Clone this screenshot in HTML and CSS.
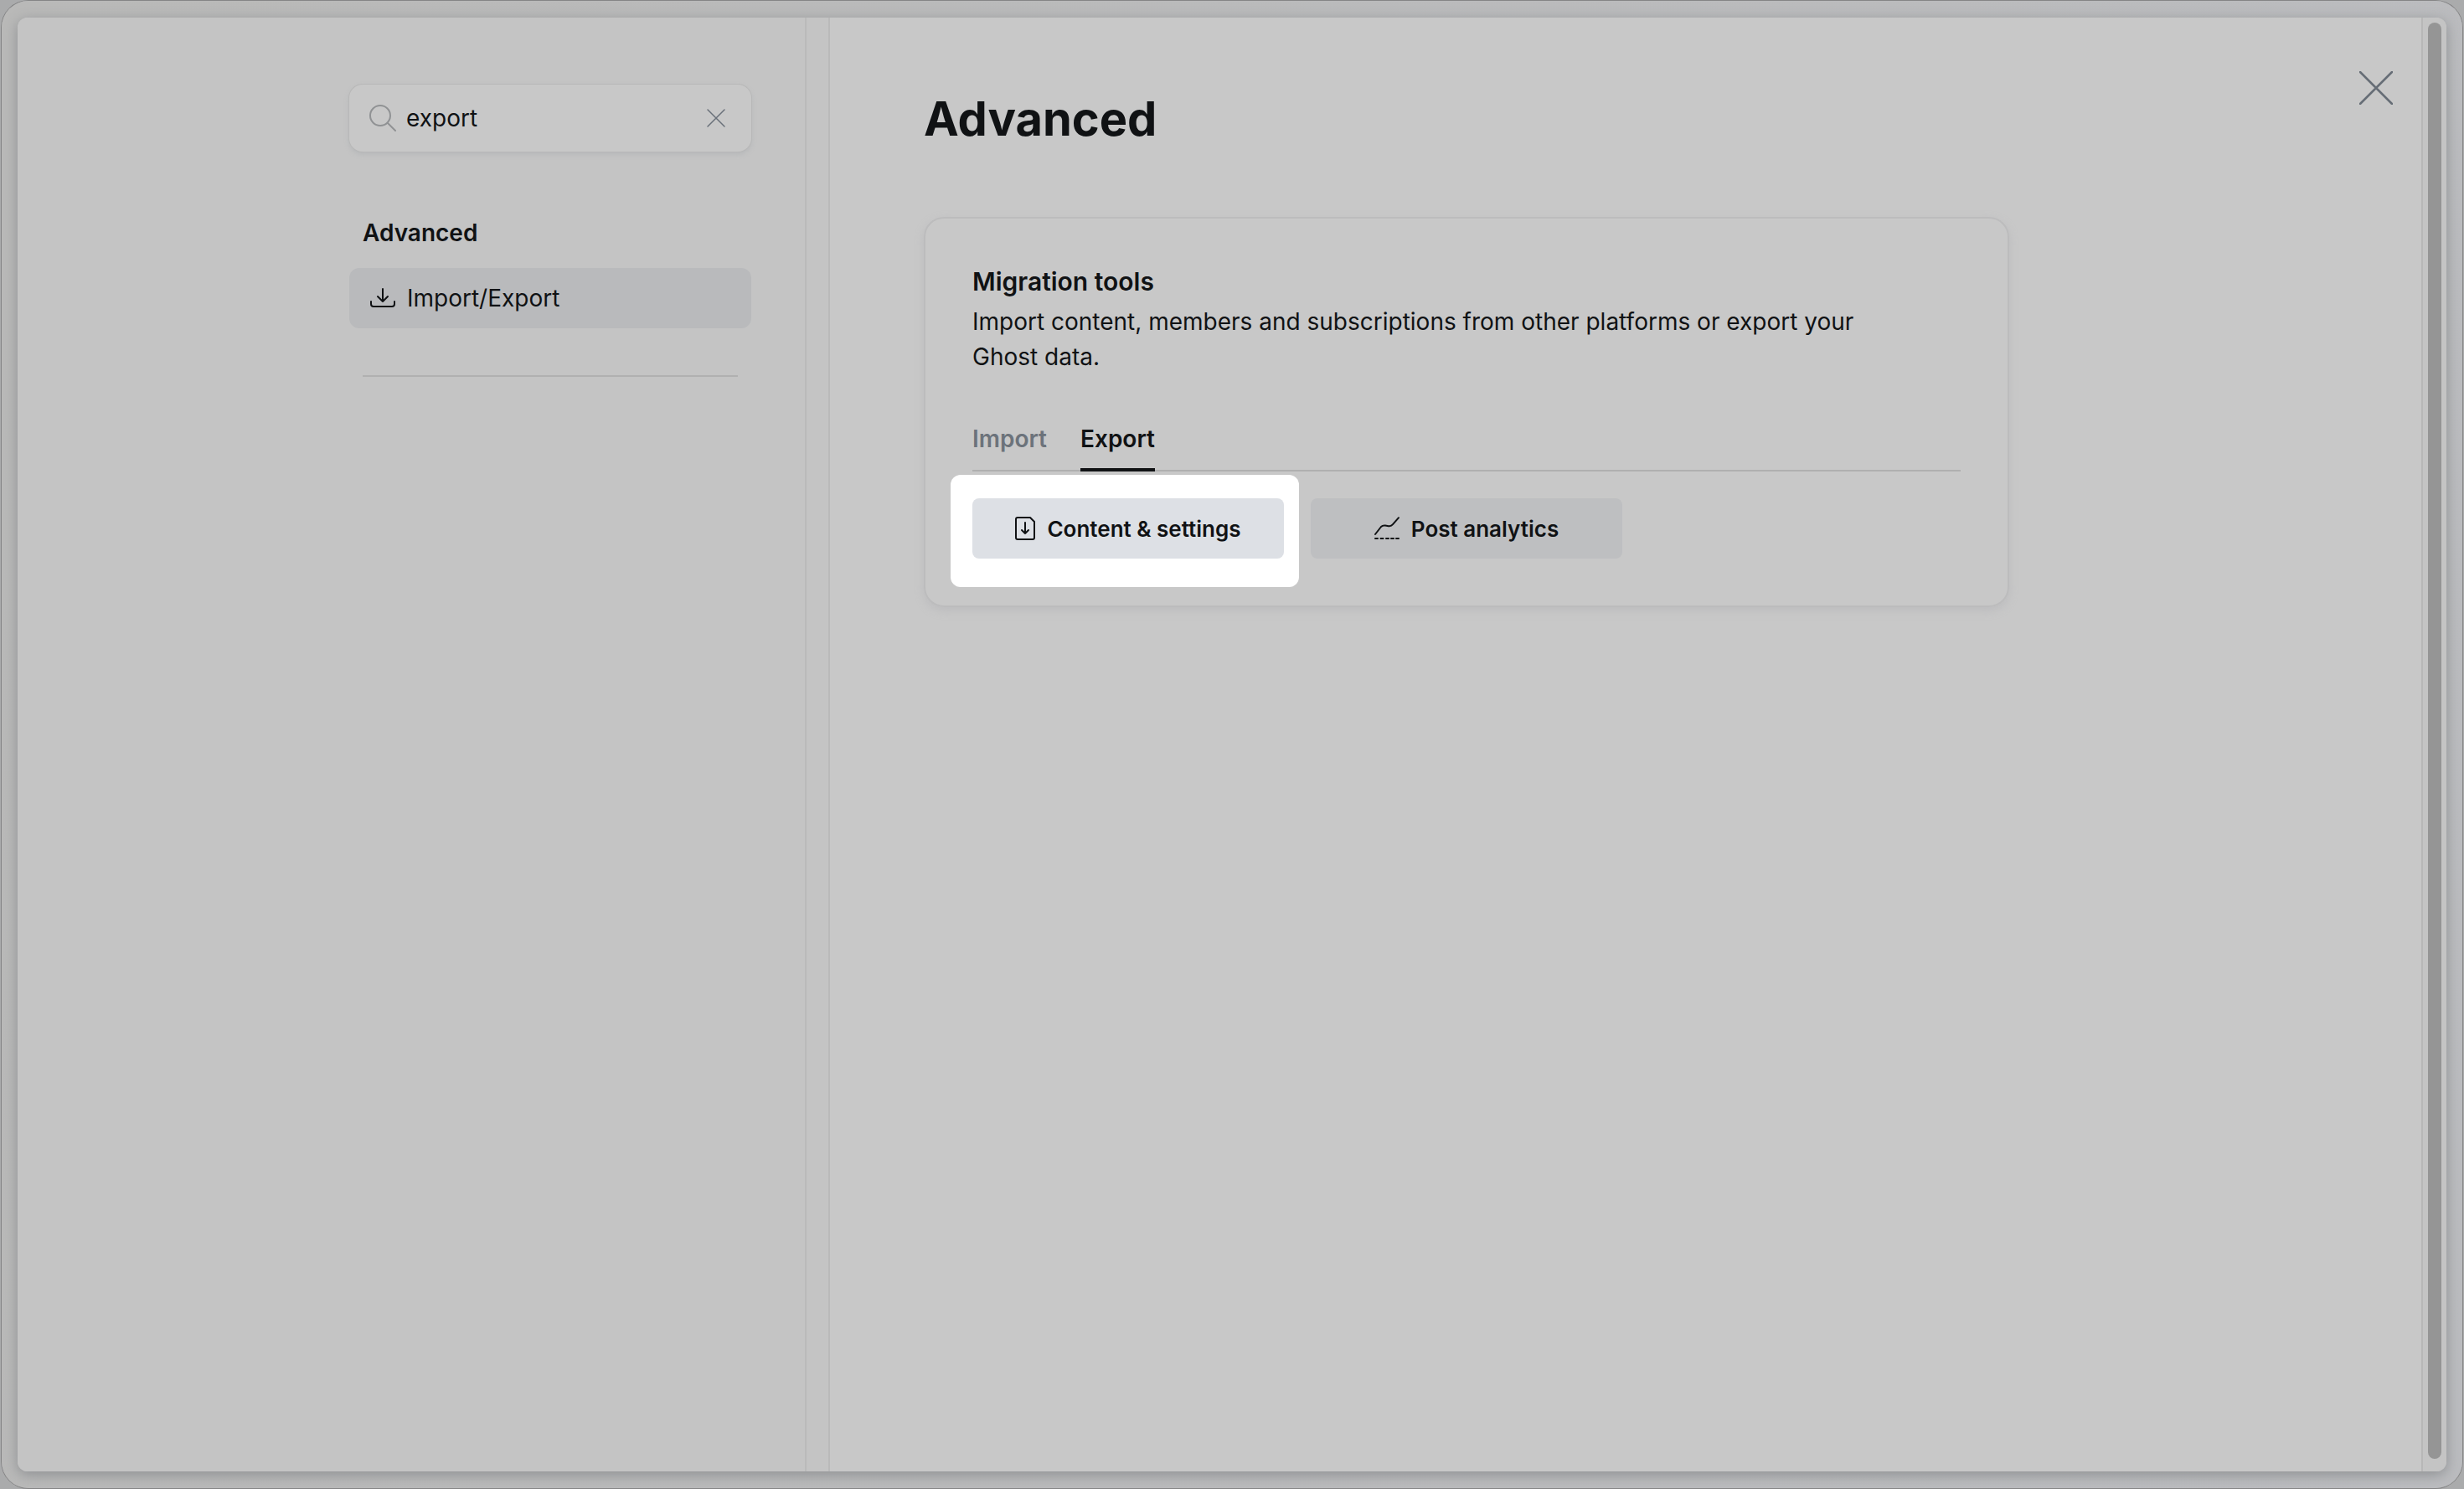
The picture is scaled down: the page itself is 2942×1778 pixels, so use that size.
FILE: index.html
```
<!DOCTYPE html>
<html lang="en">

<head>
    <meta charset="UTF-8">
    <meta name="viewport" content="width=device-width, initial-scale=1.0">
    <title>Settings - Advanced</title>
    <link rel="stylesheet" href="styles.css">
</head>

<body>
    <div class="frame">
        <div class="window">
            <aside class="sidebar">
                <div class="sidebar-content">
                    <div class="search">
                        <svg class="search-icon" viewBox="0 0 32 32" aria-hidden="true">
                            <circle cx="13" cy="13" r="12" />
                            <path d="M22 22l9 9" />
                        </svg>
                        <input type="text" value="export" aria-label="Search settings">
                        <button class="clear" aria-label="Clear search">
                            <svg viewBox="0 0 20 20"><path d="M0 0l20 20M20 0L0 20" stroke-width="1.500" /></svg>
                        </button>
                    </div>
                    <nav>
                        <h2>Advanced</h2>
                        <a href="#migration" class="nav-item">
                            <svg viewBox="0 0 30 24" aria-hidden="true">
                                <path d="M15 1v15M9 10l6 6 6-6M1 16v3q0 3 3 3h22q3 0 3-3v-3" />
                            </svg>
                            Import/Export
                        </a>
                    </nav>
                    <hr>
                </div>
            </aside>
            <div class="gutter"></div>
            <main>
                <button class="close" aria-label="Close settings">
                    <svg viewBox="0 0 40 40"><path d="M1 1l38 38M39 1L1 39" stroke-width="2.500" /></svg>
                </button>
                <h1>Advanced</h1>
                <section class="card" id="migration">
                    <h3>Migration tools</h3>
                    <p>Import content, members and subscriptions from other platforms or export your Ghost data.</p>
                    <div class="tabs" role="tablist">
                        <button role="tab" aria-selected="false">Import</button>
                        <button role="tab" aria-selected="true" class="selected">Export</button>
                    </div>
                    <div class="actions">
                        <button class="spotlight">
                            <svg class="file-icon" viewBox="0 0 24 28" aria-hidden="true">
                                <path d="M3 1h15l5 5v19q0 2-2 2H3q-2 0-2-2V3q0-2 2-2zM12 7v13M8 16l4 4 4-4" />
                            </svg>
                            Content &amp; settings
                        </button>
                        <button>
                            <svg class="chart-icon" viewBox="0 0 30 28" aria-hidden="true">
                                <path d="M1 21l7-9q2-2 5-1.500l4 .7q3 .5 5-2l7-8" />
                                <path d="M1 26h3M7.500 26h3M14 26h3M20 26h3M26 26h3" />
                            </svg>
                            Post analytics
                        </button>
                    </div>
                </section>
            </main>
            <div class="scrollbar"><div class="thumb"></div></div>
        </div>
    </div>
</body>

</html>
```
FILE: styles.css
```
* {
    box-sizing: border-box;
}

body {
    margin: 0;
    height: 100vh;
    padding: 1px 2px;
    background-color: #aaabac;
    color: #101214;
    font-family: Inter, "Liberation Sans", sans-serif;
    font-size: 28px;
    font-optical-sizing: none;
}

h1,
h2,
h3,
p {
    margin: 0;
}

button {
    font: inherit;
    font-optical-sizing: inherit;
    color: inherit;
    background: none;
    border: none;
    padding: 0;
    cursor: pointer;
}

svg {
    display: block;
    flex: none;
    fill: none;
    stroke: currentColor;
    stroke-width: 2;
    stroke-linecap: round;
    stroke-linejoin: round;
}

.frame {
    height: 100%;
    padding: 20px 19px;
    border-radius: 32px;
    background: linear-gradient(100deg, #b9b9b8, #bbbcbf);
    box-shadow: 0 0 0 1px #858586;
}

.window {
    display: grid;
    grid-template-columns: minmax(auto, 942px) 28px 1fr 30px;
    height: 100%;
    border-radius: 12px;
    overflow: hidden;
    background-color: #c8c8c8;
    box-shadow: 0 4px 16px #8e9093;
}

.sidebar {
    display: flex;
    justify-content: flex-end;
    padding: 80px 64px 40px 40px;
    background-color: #c4c4c4;
    border-right: 2px solid #bababa;
}

.sidebar-content {
    width: 480px;
}

.search {
    display: flex;
    align-items: center;
    height: 80px;
    padding: 0 32px 0 24px;
    border-radius: 16px;
    background-color: #c8c8c8;
    box-shadow: 0 0 0 1px #b8b8b8, 0 3px 6px #b4b6b8;
}

.search-icon {
    width: 32px;
    height: 32px;
    color: #909294;
}

.search input {
    flex: 1;
    min-width: 0;
    padding: 0;
    margin-left: 12px;
    border: none;
    outline: none;
    background: none;
    font: inherit;
    color: inherit;
}

.clear {
    color: #697079;
}

.clear svg {
    width: 20px;
    height: 20px;
    overflow: visible;
}

nav h2 {
    margin: 77px 16px 22px;
    font-size: 28px;
    line-height: 40px;
    font-weight: 600;
}

.nav-item {
    display: flex;
    align-items: center;
    gap: 14px;
    height: 72px;
    padding: 0 25px;
    border-radius: 12px;
    background-color: #b9babc;
    color: inherit;
    text-decoration: none;
}

.nav-item svg {
    width: 30px;
    height: 24px;
}

hr {
    margin: 56px 16px 0;
    border: none;
    border-top: 2px solid #b0b0b0;
}

.gutter {
    background-color: #c4c4c4;
    border-right: 2px solid #bababa;
}

main {
    position: relative;
    padding: 85px 112px;
}

.close {
    position: absolute;
    top: 64px;
    right: 34px;
    color: #666d76;
}

.close svg {
    width: 40px;
    height: 40px;
}

h1 {
    font-size: 56px;
    line-height: 72px;
    font-weight: 700;
    font-optical-sizing: auto;
}

.card {
    max-width: 1296px;
    margin-top: 81px;
    padding: 54px 56px 56px;
    border: 2px solid #bcbcbd;
    border-radius: 24px;
    box-shadow: 0 4px 12px #bcbcbe;
}

.card h3 {
    font-size: 30px;
    line-height: 42px;
    font-weight: 600;
}

.card p {
    margin-top: 6px;
    max-width: 1100px;
    line-height: 42px;
}

.tabs {
    display: flex;
    gap: 40px;
    margin-top: 56px;
    box-shadow: inset 0 -2px #b0b0b0;
}

.tabs button {
    padding-bottom: 14px;
    border-bottom: 4px solid transparent;
    line-height: 42px;
    font-weight: 600;
    color: #6c737b;
}

.tabs .selected {
    color: inherit;
    border-color: #101214;
}

.actions {
    display: flex;
    gap: 32px;
    margin-top: 32px;
    position: relative;
    z-index: 0;
}

.actions button {
    display: flex;
    align-items: center;
    justify-content: center;
    gap: 14px;
    width: 372px;
    height: 72px;
    border-radius: 8px;
    background-color: #bebfc1;
    font-size: 26px;
    font-weight: 600;
}

.actions .spotlight {
    position: relative;
    background: none;
}

/* white highlight behind the button */
.spotlight::before,
.spotlight::after {
    content: "";
    position: absolute;
    z-index: -1;
    inset: -28px -18px -34px -26px;
    border-radius: 12px;
    background-color: #fff;
}

.spotlight::after {
    inset: 0;
    border-radius: 8px;
    background-color: #dde0e5;
}

.file-icon {
    width: 24px;
    height: 28px;
}

.chart-icon {
    width: 30px;
    height: 28px;
}

.scrollbar {
    padding: 6px 6px 15px;
    border-left: 2px solid #b7b7b7;
    background-color: #c4c4c4;
}

.thumb {
    width: 16px;
    height: 100%;
    border-radius: 8px;
    background-color: #959595;
}
```
